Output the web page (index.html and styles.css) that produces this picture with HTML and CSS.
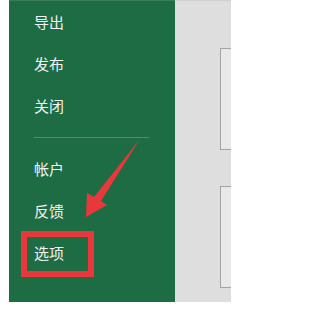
FILE: index.html
```html
<!DOCTYPE html>
<html lang="zh">
<head>
<meta charset="utf-8">
<link rel="stylesheet" href="styles.css">
</head>
<body>
<div class="window">
  <div class="gutter"></div>
  <nav class="sidebar">
    <div class="item">导出</div>
    <div class="item">发布</div>
    <div class="item">关闭</div>
    <div class="sep"></div>
    <div class="item">帐户</div>
    <div class="item">反馈</div>
    <div class="item">选项</div>
  </nav>
  <div class="panel">
    <div class="card"></div>
    <div class="card"></div>
  </div>
</div>
<div class="highlight"></div>
<svg class="arrow" width="242" height="311" viewBox="0 0 242 311">
  <polygon points="140,139 101,201 107,205 86,217 87,193 94,197" fill="#e8383b"/>
</svg>
</body>
</html>
```
FILE: styles.css
```css
html, body {
  margin: 0;
  padding: 0;
  background: #ffffff;
}
body {
  width: 242px;
  height: 311px;
  position: relative;
  overflow: hidden;
  font-family: "Noto Sans CJK SC", "Microsoft YaHei", sans-serif;
}
.window {
  display: flex;
  height: 302px;
}
.gutter {
  width: 9px;
  background: #ffffff;
}
.sidebar {
  width: 166px;
  background: #1e6c44;
  border-top: 1px solid #3a7d56;
  box-sizing: border-box;
  display: flex;
  flex-direction: column;
}
.item {
  height: 42px;
  line-height: 42px;
  padding-left: 25px;
  font-size: 15px;
  color: #f2f2f2;
}
.sep {
  height: 1px;
  width: 115px;
  margin: 10px 0 10px 25px;
  background: #4f8d69;
}
.panel {
  width: 56px;
  background: #dedede;
  border-top: 1px solid #d0d0d0;
  box-sizing: border-box;
  padding: 47px 0 0 45px;
  display: flex;
  flex-direction: column;
  gap: 36px;
  overflow: hidden;
}
.card {
  width: 20px;
  height: 102px;
  flex: none;
  background: #e9e9e9;
  border: 1px solid #a3a3a3;
  border-right: none;
  box-sizing: border-box;
}
.highlight {
  position: absolute;
  left: 21px;
  top: 231px;
  width: 73px;
  height: 46px;
  border: 6px solid #e8383b;
  box-sizing: border-box;
}
.arrow {
  position: absolute;
  left: 0;
  top: 0;
}
```
